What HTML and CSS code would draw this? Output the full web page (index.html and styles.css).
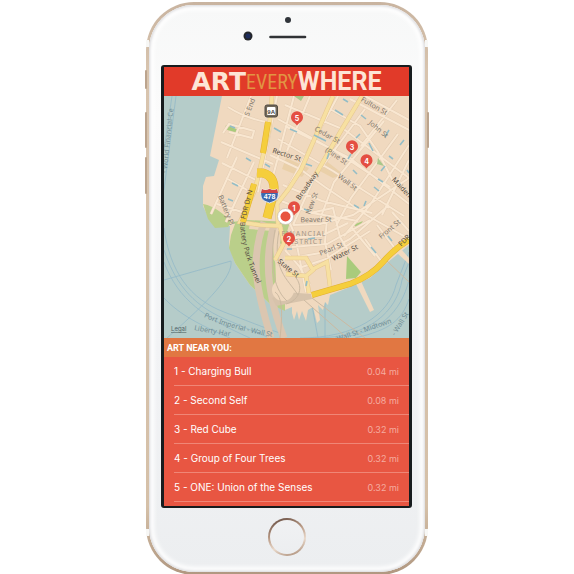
FILE: index.html
```html
<!DOCTYPE html>
<html lang="en">
<head>
<meta charset="utf-8">
<meta name="viewport" content="width=device-width, initial-scale=1">
<title>Art Everywhere</title>
<link rel="stylesheet" href="styles.css">
</head>
<body>
<div class="phone">
  <span class="side-key mute"></span>
  <span class="side-key volume-up"></span>
  <span class="side-key volume-down"></span>
  <span class="side-key power"></span>
  <span class="band band-top"></span>
  <span class="band band-bottom"></span>
  <div class="face">
    <div class="earpiece">
      <svg class="sensors" viewBox="0 0 70 30" aria-hidden="true">
        <circle cx="36" cy="5" r="3" fill="#30343a"/>
        <circle cx="-4" cy="21" r="4.500" fill="#24262b"/>
        <circle cx="-4" cy="21" r="2.500" fill="#1d2c5c"/>
        <path d="M18.500 22H53" stroke="#303235" stroke-width="2.600" stroke-linecap="round"/>
      </svg>
    </div>
    <main class="screen">
      <h1 class="logo"><span class="logo-art">ART</span><span class="logo-every">EVERY</span><span class="logo-where">WHERE</span></h1>
      <svg class="map" viewBox="164 96 245 242" role="img" aria-label="Map of Lower Manhattan">
        <rect x="164" y="96" width="245" height="242" fill="#b5ccc9"/>
        <g fill="none" stroke="#93b9c8" stroke-width=".8">
          <path d="M176 96L164 190M172 96L164 150M164 280L231 261C233 276 210 300 167 338"/>
          <path d="M164 228C170 272 190 299 224 312S270 330 286 335"/>
          <path d="M164 250C174 280 190 304 225 319S255 332 270 338M164 262C178 300 205 318 250 338M164 298C180 315 200 325 230 338"/>
          <path d="M300 338C355 338 389 315 396 285L409 252M315 338C369 338 397 311 402 280L409 262M335 338C380 334 401 312 409 280M355 338C390 330 402 320 409 299M311 300L318 338M325 300V338"/>
        </g>
        <path d="M222 96L210 156L219 160L214 176L206 177L203 186L203 206L210 221L230 226L229 245L235 263L250 285L270 304L285 310L292 307L292 313L294 320L297 311L299 320L302 311L306 321L308 310L313 307L317 323L320 320L318 305L323 310L325 302L328 305L330 295L350 287L370 278L388 262L409 245V96Z" fill="#f0d9bf"/>
        <path d="M356 284L370 312L374 310L361 281ZM397 253L409 264V258L401 249Z" fill="#f0d9bf"/>
        <path d="M203 204C215 206 225 215 231 222L228 227L215 228L208 219ZM232 222L247 220L290 222L283 245L275 253L276 282L285 291L285 311L270 304L250 285L235 263L229 248L231 235L235 224Z" fill="#bacf8a"/>
        <path d="M347 256L361 272L356 278L346 279ZM226 125L239 130L238 134L225 129ZM353 225L363 221L358 228Z" fill="#a9cb7c"/>
        <path d="M325 160L343 174L333 178L318 170ZM286 158L309 168L302 177L282 169Z" fill="#ead0a9"/>
        <path d="M250 223L283 227L280 243L287 253L278 267L274 260L272 231L249 229Z" fill="#ecd5ba"/>
        <path d="M264 222C250 260 256 288 271 338M274 225C263 261 269 300 284 338" fill="none" stroke="#dbc6b0" stroke-width="7"/>
        <path d="M285 292L311 294L312 299L276 306L272 298Z" fill="#d7c3ab"/>
        <circle cx="283" cy="290" r="11" fill="#f0d9bf"/>
        <g fill="none" stroke="#cbb9a1" stroke-width="1">
          <path d="M275 230C268 270 276 291 287 301M279 231C272 270 287 278 298 295M285 270C305 278 304 299 286 304M275 292C282 297 283 311 280 338M386 260L409 282M312 298L365 338M304 300L347 338"/>
        </g>
        <g class="road-edge">
          <path id="streets" d="M228 107Q245 118 266 122M251 96L227 158M221 142L273 164M223 133L229 124L254 131L252 138L229 132M237 157L211 214M254 162L226 222M222 163L258 181M226 178L249 191M217 204L245 213M270 155L300 169L325 187L368 216L409 239M277 96L258 192M285 105L345 130L409 178M285 126L350 158L409 204M278 139L333 171L404 216M278 119L335 151L390 187M294 96L272 180M310 96L287 151M338 96L285 193M365 109L315 176L293 225M384 121L334 182L319 222M398 134L351 198L336 226M409 145L370 205L344 236M409 160L382 215M350 99L409 130M330 109L360 126L378 152L395 185M365 96L409 120M283 185L322 201L372 213M276 199L312 213L358 221M293 225L320 224L353 215L409 178M286 238L321 236L348 223M292 247L327 244L370 220M297 257L326 252L350 239L389 205M302 267L326 259L370 231M310 213L333 208L340 237L350 254M327 219L325 242L331 270M365 239L384 265M377 225L397 251M352 228L375 256M392 212L409 231M285 212L295 235L306 292M285 250L299 266L310 285M397 100L361 146"/>
        </g>
        <use href="#streets" class="road-fill"/>
        <g fill="none" stroke="#e6c68e" stroke-width="4.500">
          <path d="M272 96L269 130L255 190L240 222L260 225L280 226L284 243L275 260"/>
          <path d="M333 96L301 170L288 190L277 204L278 224M362 96L342 129L316 174M285 258L306 258L313 270L306 276L309 293M306 276L286 274M311 270L327 262L330 286"/>
        </g>
        <g fill="none" stroke="#f7e0a1" stroke-width="3.500">
          <path d="M272 96L269 130L255 190L240 222L260 225L280 226L284 243L275 260"/>
          <path d="M333 96L301 170L288 190L277 204L278 224M362 96L342 129L316 174M285 258L306 258L313 270L306 276L309 293M306 276L286 274M311 270L327 262L330 286"/>
        </g>
        <g fill="none" stroke="#e0af31" stroke-width="6">
          <path d="M268 122L263 153M254 184L243 222M312 295L350 284Q371 276 383 262T409 240"/>
          <path d="M257 173H263Q275 176 274 191L267 218" stroke-width="9"/>
        </g>
        <g fill="none" stroke="#f5ce3c" stroke-width="5">
          <path d="M268 122L263 153M254 184L243 222M312 295L350 284Q371 276 383 262T409 240"/>
          <path d="M257 173H263Q275 176 274 191L267 218" stroke-width="8"/>
        </g>
        <g stroke="#94bdc6" stroke-width="1.600" fill="none">
          <path d="M230 126L235 128M246 158L251 161M265 164L270 167M232 183L238 186M228 199L233 201M274 128L281 132M290 129L297 132M314 135L326 141M335 110L343 115M343 99L348 102M361 115L366 119M356 138L360 134M369 143L373 151M385 137L389 130M389 156L393 159M348 159L351 154M353 170L357 174M306 164L312 166M329 153L327 159M378 179L383 182M381 171L385 166M374 187L379 191M354 205L359 208M364 206L366 201M400 145L404 140M407 170L409 173M371 247L376 253M388 236L392 241M304 209L309 211M308 239L315 238M287 249L292 249M307 281L306 286"/>
        </g>
        <path d="M378 158L384 166L377 164ZM294 96H304L301 101Z" fill="#a8c78a"/>
        <g class="streets-text" text-anchor="middle">
          <text transform="translate(170 141) rotate(-84)" class="water-label">- World Financial-Ce</text>
          <text transform="translate(252 108) rotate(-69)">S End</text>
          <text transform="translate(286 157) rotate(18)" class="major">Rector St</text>
          <text transform="translate(326 137) rotate(29)">Cedar St</text>
          <text transform="translate(335 158) rotate(34)">(Pine St</text>
          <text transform="translate(373 108) rotate(30)">Fulton St</text>
          <text transform="translate(377 131) rotate(40)">John St</text>
          <text transform="translate(346 184) rotate(37)">Wall St</text>
          <text transform="translate(309 187) rotate(-55)" class="major">Broadway</text>
          <text transform="translate(314 204) rotate(-70)">New St</text>
          <text transform="translate(400 189) rotate(47)" class="major">Maiden</text>
          <text transform="translate(316 222) rotate(-1)">Beaver St</text>
          <text transform="translate(332 251) rotate(-22)">Pearl St</text>
          <text transform="translate(346 255) rotate(-27)" class="major">Water St</text>
          <text transform="translate(391 231) rotate(-40)">Front St</text>
          <text transform="translate(406 242) rotate(-45)" class="major">FDR</text>
          <text transform="translate(249 205) rotate(-76)" class="major">FDR Dr N</text>
          <text transform="translate(224 211) rotate(68)">Battery Pl</text>
          <text transform="translate(287 270) rotate(38)" class="major">State St</text>
          <text transform="translate(365 332) rotate(-19)" class="water-label">Wall St - Midtown</text>
          <text transform="translate(402 325) rotate(-58)" class="water-label">- Wall St</text>
        </g>
        <path id="tunnel" d="M240 222Q241 251 258 286" fill="none"/>
        <text class="streets-text"><textPath href="#tunnel" class="major">Battery Park Tunnel</textPath></text>
        <path id="ferry" d="M204 317Q232 331 286 339" fill="none"/>
        <text class="water-label"><textPath href="#ferry">Port Imperial - Wall St</textPath></text>
        <text x="194" y="330" transform="rotate(10 194 330)" class="water-label">Liberty Har</text>
        <g class="district" text-anchor="middle">
          <text x="304" y="236">FINANCIAL</text>
          <text x="304" y="244">DISTRICT</text>
        </g>
        <text x="171" y="331" class="legal">Legal</text>
        <rect x="265" y="105" width="12.500" height="12" rx="2" fill="#73695a" stroke="#514b42"/>
        <rect x="267" y="107" width="8.500" height="8" rx="1" fill="#fff"/>
        <text x="271.200" y="113.500" class="shield-9a" text-anchor="middle">9A</text>
        <path d="M262 189Q265 191 269.500 189Q274 191 277 189Q282 200 269.500 203Q257 200 262 189Z" fill="#3b68ae" stroke="#fff" stroke-width=".8"/>
        <path d="M262 189Q265 191 269.500 189Q274 191 277 189L278 193H261Z" fill="#cf4447"/>
        <text x="269.500" y="199" class="shield-478" text-anchor="middle">478</text>
        <defs><path id="pin" d="M0 7.500C-2 4.700-6 3.500-6-.7A6 6 0 0 1 6-.7C6 3.500 2 4.700 0 7.500Z"/></defs>
        <g class="pin" text-anchor="middle">
          <g transform="translate(297 118)"><use href="#pin"/><text y="2.500">5</text></g>
          <g transform="translate(352 147)"><use href="#pin"/><text y="2.500">3</text></g>
          <g transform="translate(366.500 161)"><use href="#pin"/><text y="2.500">4</text></g>
          <g transform="translate(294 208)"><use href="#pin"/><text y="2.500">1</text></g>
          <g transform="translate(289 239)"><use href="#pin"/><text y="2.500">2</text></g>
        </g>
        <circle cx="285.500" cy="216.500" r="8" fill="#fff" stroke="#c8b8aa" stroke-width=".7"/>
        <circle cx="285.500" cy="216.500" r="5" fill="#e85440"/>
      </svg>
      <h2 class="section-title">ART NEAR YOU:</h2>
      <ul class="places">
        <li><span>1 - Charging Bull</span><span class="distance">0.04 mi</span></li>
        <li><span>2 - Second Self</span><span class="distance">0.08 mi</span></li>
        <li><span>3 - Red Cube</span><span class="distance">0.32 mi</span></li>
        <li><span>4 - Group of Four Trees</span><span class="distance">0.32 mi</span></li>
        <li><span>5 - ONE: Union of the Senses</span><span class="distance">0.32 mi</span></li>
      </ul>
    </main>
    <div class="chin"><button class="home" type="button" aria-label="Home"></button></div>
  </div>
</div>
</body>
</html>
```
FILE: styles.css
```css
* { box-sizing: border-box; }

body {
  margin: 0;
  padding-top: 2px;
  background: #fff;
  font-family: Inter, "Liberation Sans", sans-serif;
}

.phone {
  position: relative;
  max-width: 282px;
  margin: 0 auto;
  padding: 3px;
  border-radius: 48px;
  background: linear-gradient(#c9b4a0, #d8c4ae 12%, #d5c0a8 88%, #b09780);
}

.face {
  padding: 0 13px 0 12px;
  border-radius: 45px;
  background: linear-gradient(#f7f8f8, #fbfbfb 20%, #f2f3f5 60%, #eceef0);
  box-shadow: inset 0 0 3px 1px #d5d5d8, inset 0 0 4px 5px #fff;
}

.earpiece {
  display: flex;
  justify-content: center;
  height: 60px;
  padding-top: 10px;
}

.sensors {
  width: 70px;
  height: 30px;
  overflow: visible;
}

.screen {
  border: solid #171c1e;
  border-width: 2px 3px;
  border-radius: 3px;
  background: #e85642;
  overflow: hidden;
}

.logo {
  display: flex;
  justify-content: center;
  align-items: center;
  height: 29px;
  margin: 0;
  background: #e13a29;
  color: #fde5d5;
  line-height: 28px;
}

.logo-art { font: bold 25px/28px "DejaVu Sans", sans-serif; }
.logo-every { font: 20px/28px "Liberation Sans Narrow", "Roboto Condensed", sans-serif; color: #e29443; }
.logo-where { font: bold 25px/28px Roboto, sans-serif; }

.map {
  display: block;
  width: 100%;
  height: auto;
}

.road-edge {
  fill: none;
  stroke: #e4cdb3;
  stroke-width: 3px;
}

.road-fill {
  fill: none;
  stroke: #f9e7d1;
  stroke-width: 2px;
}

.streets-text { font: 7px "Noto Sans", sans-serif; fill: #82786d; }
.major { fill: #554d43; }
.water-label { font: 7px "Noto Sans", sans-serif; fill: #708c95; }
.district { font: 7px "Noto Sans", sans-serif; fill: #a39587; letter-spacing: 1px; }
.legal { font: 6px Inter, sans-serif; fill: #536467; text-decoration: underline; }
.shield-9a { font: bold 6px "Liberation Sans", sans-serif; fill: #49433b; }
.shield-478 { font: bold 7px "Liberation Sans", sans-serif; fill: #fff; }
.pin { font: bold 7px Inter, sans-serif; fill: #e44f42; }
.pin text { fill: #fff; }

.section-title {
  height: 19px;
  margin: 0;
  padding-left: 3px;
  background: #e17742;
  color: #fff;
  font: bold 9px/20px Roboto, sans-serif;
}

.places {
  margin: 0;
  padding: 0 0 4px 10px;
  list-style: none;
}

.places li {
  display: flex;
  justify-content: space-between;
  align-items: center;
  height: 29px;
  padding-right: 10px;
  border-bottom: 1px solid #f08676;
  color: #fff;
  font-size: 10px;
}

.places .distance {
  color: #f5aca0;
  font-size: 9px;
}

.chin {
  display: flex;
  justify-content: center;
  height: 64px;
  padding-top: 10px;
}

.home {
  width: 38px;
  height: 38px;
  padding: 0;
  border: 2px solid transparent;
  border-radius: 50%;
  background: linear-gradient(#f0f1f3, #eceef0) padding-box,
    linear-gradient(160deg, #5b4238, #b99a85 40%, #e9d9cb 65%, #a08069) border-box;
}

.side-key {
  position: absolute;
  left: -1px;
  width: 2px;
  border-radius: 1px;
  background: #bba48e;
}

.mute { top: 68px; height: 19px; }
.volume-up { top: 110px; height: 36px; }
.volume-down { top: 155px; height: 37px; }
.power { top: 110px; right: -1px; left: auto; height: 36px; }

.band {
  position: absolute;
  left: 0;
  right: 0;
  height: 7px;
  border: solid #f7f7f5;
  border-width: 0 3px;
}

.band-top { top: 38px; }
.band-bottom { bottom: 39px; }
```
